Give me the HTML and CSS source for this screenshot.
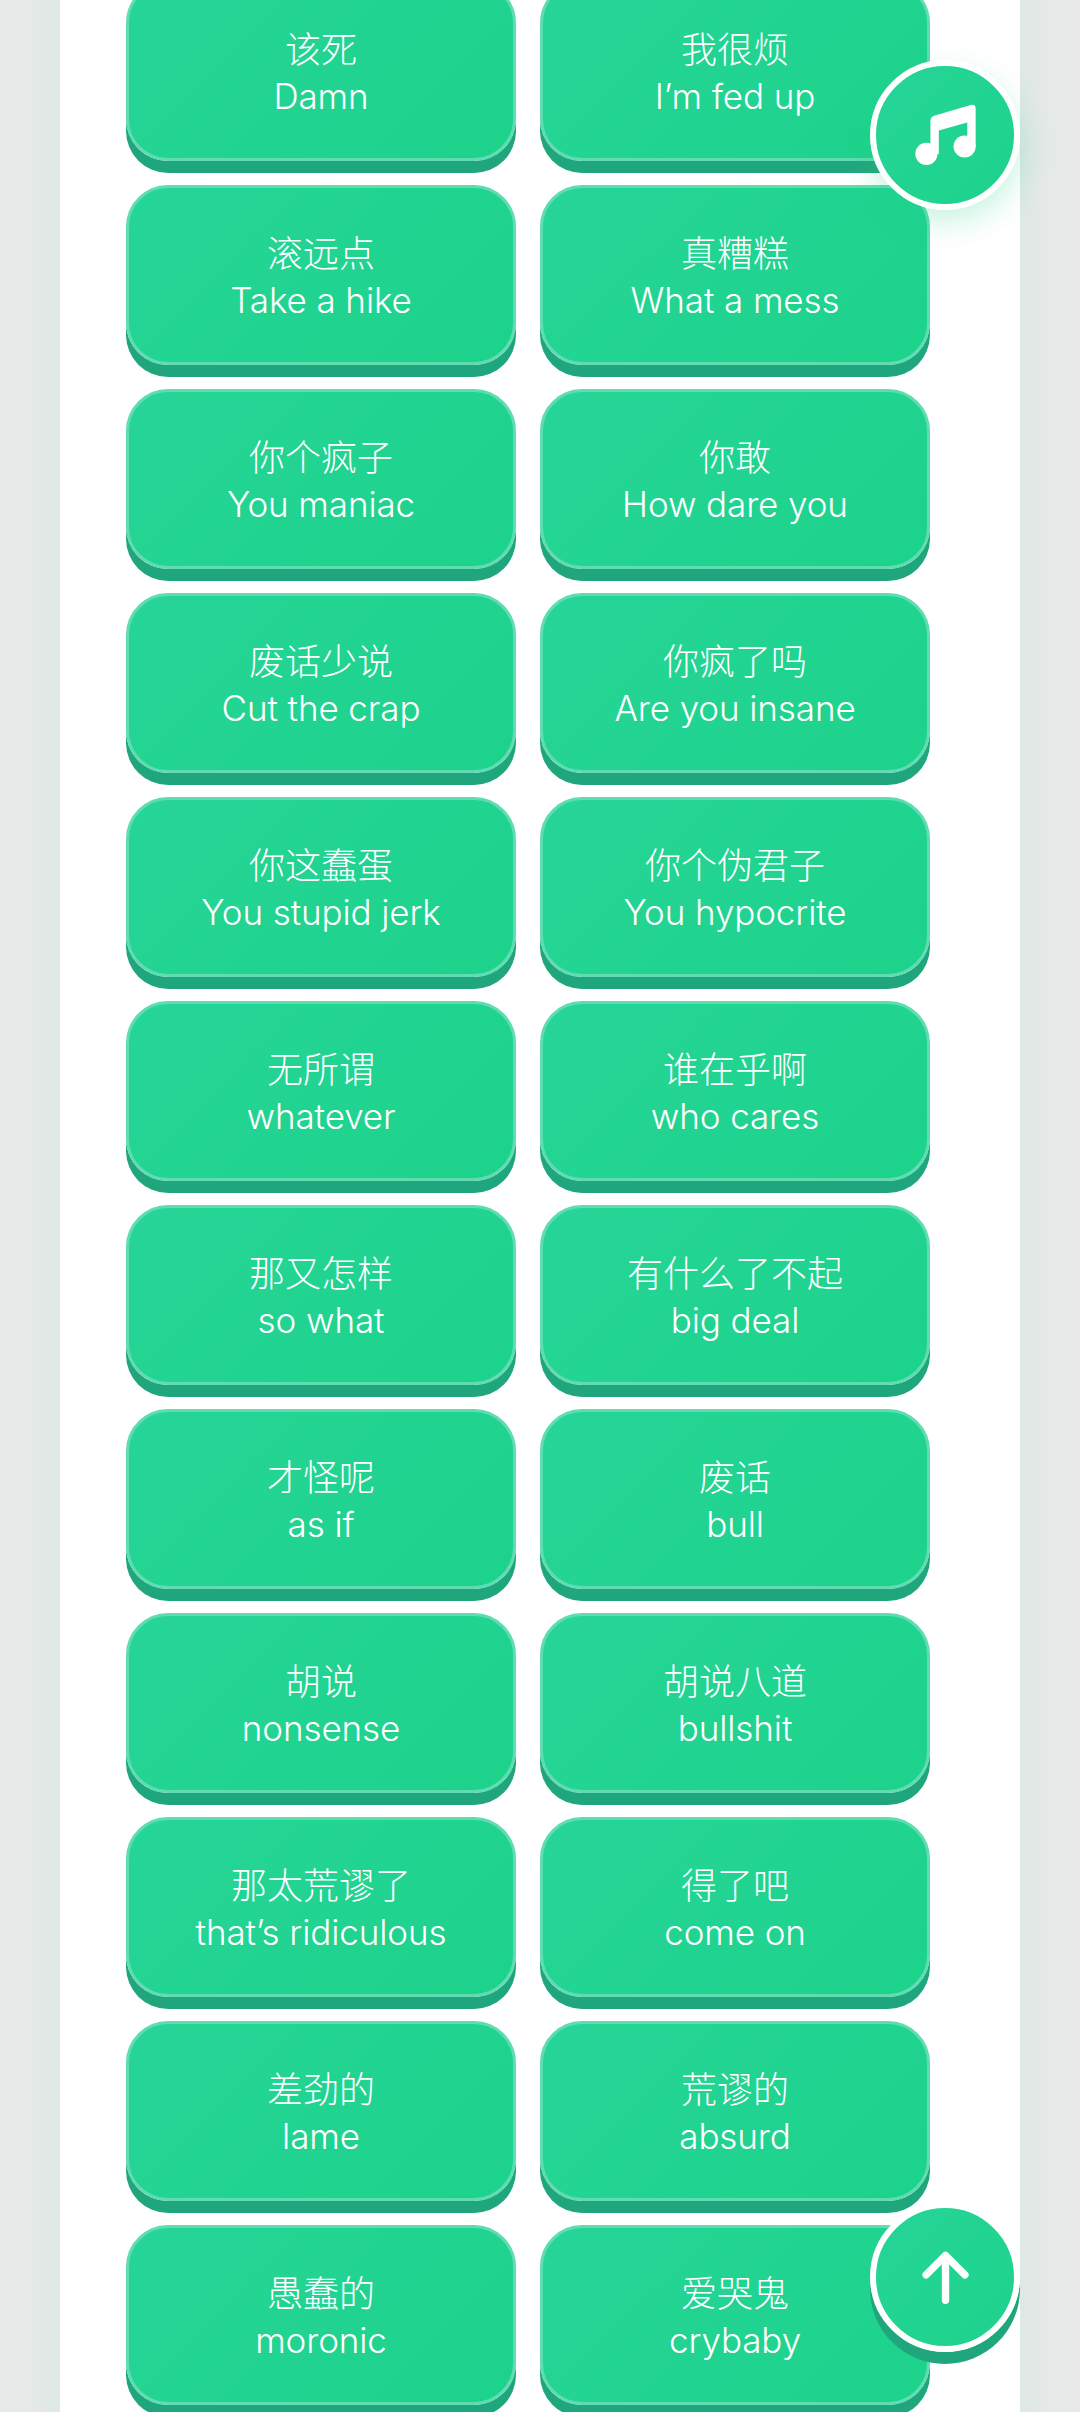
FILE: index.html
```html
<!DOCTYPE html>
<html lang="zh-CN">

<head>
    <meta charset="UTF-8">
    <meta name="viewport" content="width=device-width, initial-scale=1.0">
    <title>Phrases</title>
    <link rel="stylesheet" href="styles.css">
</head>

<body>
    <div class="panel">
        <div class="phrases">
            <div class="phrase"><span class="zh">该死</span><span>Damn</span></div>
            <div class="phrase"><span class="zh">我很烦</span><span>I’m fed up</span></div>
            <div class="phrase"><span class="zh">滚远点</span><span>Take a hike</span></div>
            <div class="phrase"><span class="zh">真糟糕</span><span>What a mess</span></div>
            <div class="phrase"><span class="zh">你个疯子</span><span>You maniac</span></div>
            <div class="phrase"><span class="zh">你敢</span><span>How dare you</span></div>
            <div class="phrase"><span class="zh">废话少说</span><span>Cut the crap</span></div>
            <div class="phrase"><span class="zh">你疯了吗</span><span>Are you insane</span></div>
            <div class="phrase"><span class="zh">你这蠢蛋</span><span>You stupid jerk</span></div>
            <div class="phrase"><span class="zh">你个伪君子</span><span>You hypocrite</span></div>
            <div class="phrase"><span class="zh">无所谓</span><span>whatever</span></div>
            <div class="phrase"><span class="zh">谁在乎啊</span><span>who cares</span></div>
            <div class="phrase"><span class="zh">那又怎样</span><span>so what</span></div>
            <div class="phrase"><span class="zh">有什么了不起</span><span>big deal</span></div>
            <div class="phrase"><span class="zh">才怪呢</span><span>as if</span></div>
            <div class="phrase"><span class="zh">废话</span><span>bull</span></div>
            <div class="phrase"><span class="zh">胡说</span><span>nonsense</span></div>
            <div class="phrase"><span class="zh">胡说八道</span><span>bullshit</span></div>
            <div class="phrase"><span class="zh">那太荒谬了</span><span>that’s ridiculous</span></div>
            <div class="phrase"><span class="zh">得了吧</span><span>come on</span></div>
            <div class="phrase"><span class="zh">差劲的</span><span>lame</span></div>
            <div class="phrase"><span class="zh">荒谬的</span><span>absurd</span></div>
            <div class="phrase"><span class="zh">愚蠢的</span><span>moronic</span></div>
            <div class="phrase"><span class="zh">爱哭鬼</span><span>crybaby</span></div>
        </div>
    </div>

    <!-- 浮动按钮 -->
    <div class="float-btn music-btn">
        <svg class="float-icon" viewBox="395 305 200 200">
            <circle cx="438" cy="460" r="33" fill="#fff" />
            <circle cx="552" cy="438" r="33" fill="#fff" />
            <path d="M450 460V362Q450 350 461 346L570 314Q585 310 585 324V440H560V366L475 390V460Z" fill="#fff" />
        </svg>
    </div>
    <div class="float-btn top-btn">
        <svg class="float-icon" viewBox="395 248 200 200">
            <path d="M495 282V416M437 340L495 282L553 340" fill="none" stroke="#fff" stroke-width="22" stroke-linecap="round" stroke-linejoin="round" />
        </svg>
    </div>
</body>

</html>
```

FILE: styles.css
```css
html,
body {
    margin: 0;
    height: 2412px;
    overflow: hidden;
}

body {
    position: relative;
    font-family: Inter, "Noto Sans CJK SC", sans-serif;
    background: linear-gradient(90deg, #e7e9e8 0, #e5e9e8 30px, #dee8e4 60px, #dee8e4 1020px, #e5e9e8 1050px, #e7e9e8 100%);
}

.panel {
    margin: 0 60px;
    height: 100%;
    background-color: #fff;
    overflow: hidden;
}

.phrases {
    display: grid;
    grid-template-columns: 390px 390px;
    grid-auto-rows: 180px;
    column-gap: 24px;
    row-gap: 24px;
    margin: -19px 0 0 66px;
}

.phrase {
    display: flex;
    flex-direction: column;
    justify-content: center;
    align-items: center;
    box-sizing: border-box;
    padding-top: 4px;
    border: 3px solid #5fdcb2;
    border-radius: 42px;
    background: linear-gradient(135deg, #26d597, #1dd28b);
    box-shadow: 0 12px 0 #20a67c;
    color: #fff;
    font-size: 35px;
    font-weight: 300;
    line-height: 48px;
    letter-spacing: -0.1px;
}

.zh {
    font-size: 36px;
    line-height: 44px;
    padding-top: 1px;
    letter-spacing: 0;
}

.float-btn {
    position: absolute;
    left: 870px;
    display: flex;
    justify-content: center;
    align-items: center;
    box-sizing: border-box;
    width: 150px;
    height: 150px;
    border: 6px solid #fff;
    border-radius: 50%;
    background: linear-gradient(135deg, #26d597, #1dd28b);
}

.music-btn {
    top: 60px;
    box-shadow: 0 12px 30px rgba(30, 210, 140, 0.25);
}

.top-btn {
    top: 2202px;
    box-shadow: 0 12px 0 #20a67c;
}

.float-icon {
    width: 67px;
    height: 67px;
}
```
